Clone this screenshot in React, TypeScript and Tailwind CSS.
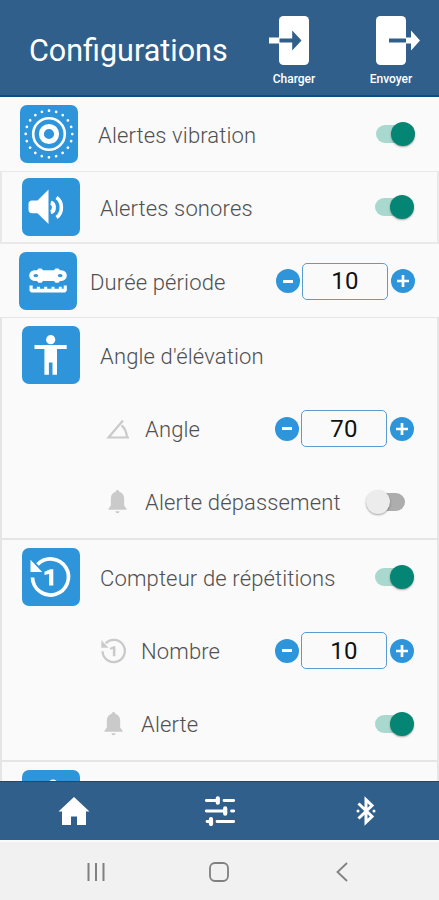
import { useState } from 'react';
import type { ReactNode } from 'react';

interface SwitchProps {
  initial: boolean;
  label: string;
}

function Switch({ initial, label }: SwitchProps) {
  const [on, setOn] = useState(initial);

  return (
    <button
      type="button"
      role="switch"
      aria-checked={on}
      aria-label={label}
      onClick={() => setOn(!on)}
      className="relative block w-[39px] h-[24px] shrink-0"
    >
      <span className={on ? 'absolute left-0 top-[3px] w-[34px] h-[18px] rounded-full bg-[#a9d8cf]' : 'absolute left-[5px] top-[3px] w-[34px] h-[18px] rounded-full bg-[#adadad]'} />
      <span className={on ? 'absolute right-0 top-0 size-[24px] rounded-full bg-[#058573] shadow-[0_1px_2px_rgba(0,0,0,0.35)]' : 'absolute left-0 top-0 size-[24px] rounded-full bg-[#ececec] shadow-[0_1px_2px_rgba(0,0,0,0.35)]'} />
    </button>
  );
}

function Stepper({ initial, label }: { initial: number; label: string }) {
  const [value, setValue] = useState(initial);

  return (
    <div className="flex items-center">
      <button type="button" aria-label={`${label} -`} onClick={() => setValue(value - 1)} className="size-[24px] rounded-full bg-[#2e95da] flex items-center justify-center">
        <span className="w-[10px] h-[3px] bg-white" />
      </button>
      <div className="ml-[2px] mr-[3px] w-[86px] h-[37px] rounded-[5px] border border-[#5c9bd0] flex items-center justify-center text-[24px] font-normal text-[#111111]">
        {value}
      </div>
      <button type="button" aria-label={`${label} +`} onClick={() => setValue(value + 1)} className="size-[24px] rounded-full bg-[#2e95da] flex items-center justify-center">
        <svg viewBox="0 0 12 12" className="size-[12px]" stroke="white" strokeWidth="2.7">
          <path d="M6 0v12M0 6h12" />
        </svg>
      </button>
    </div>
  );
}

function Tile({ children }: { children?: ReactNode }) {
  return (
    <div className="size-[58px] shrink-0 rounded-[7px] bg-[#2e95da]">
      <svg viewBox="0 0 58 58" className="size-[58px]" fill="none">
        {children}
      </svg>
    </div>
  );
}

function CounterIcon() {
  return (
    <>
      <path d="M10.500 29.500A18 18 0 1 0 15.500 16.500" stroke="currentColor" strokeWidth="3.700" />
      <path d="M8.500 11.700v12.200h11.700z" fill="currentColor" />
      <path d="M22.500 23.800l5.800-2.500h3V37.500h-4.200V25.900l-4.600 1.200z" fill="currentColor" />
    </>
  );
}

function BellIcon() {
  return (
    <svg viewBox="0 0 20 26" className="w-[19px] h-[25px]" fill="#cacaca">
      <path d="M10 .8c1.2 0 1.9.8 1.9 1.9 3.300.9 5.100 3.800 5.100 7.300v7.200l2.500 3.400v1H.5v-1L3 17.200V10c0-3.500 1.800-6.400 5.100-7.300C8.100 1.600 8.800.8 10 .8zM7.800 23.200h4.400c-.2 1.400-1 2.100-2.200 2.100s-2-.7-2.200-2.100z" />
    </svg>
  );
}

function Header() {
  return (
    <header className="h-[97px] shrink-0 bg-[#305f8b] border-b-2 border-[#0f4c80] flex text-white">
      <h1 className="pl-[29px] pt-[30px] w-[265px] text-[30.5px] leading-[42px]">Configurations</h1>
      <button type="button" className="w-[58px] pt-[15px] flex flex-col items-center">
        <svg viewBox="0 0 58 51" className="w-[58px] h-[51px]" fill="white">
          <rect x="14" y="1" width="30" height="49" rx="4.500" />
          <path d="M4 22.500h10.500v6H4z" />
          <path d="M14.500 23.500h12.700v-8L36.500 25.500l-9.300 10v-8H14.500z" fill="#305f8b" />
        </svg>
        <span className="mt-[6px] text-[12px] leading-[14px] font-medium">Charger</span>
      </button>
      <button type="button" className="ml-[39px] w-[58px] pt-[15px] flex flex-col items-center">
        <svg viewBox="0 0 58 51" className="w-[58px] h-[51px]" fill="white">
          <rect x="14" y="1" width="30" height="49" rx="4.500" />
          <path d="M27 23.500h17v4H27z" fill="#305f8b" />
          <path d="M44 22.500h5v-7l9 10-9 10v-7h-5z" />
        </svg>
        <span className="mt-[6px] text-[12px] leading-[14px] font-medium">Envoyer</span>
      </button>
    </header>
  );
}

function Settings() {
  return (
    <main className="h-[684px] shrink-0 overflow-hidden bg-[#fafafa] text-[22px] font-light tracking-[0.14px] text-[#505050]">
      <section className="h-[74px] pl-[20px] pr-[24px] flex items-center">
        <Tile>
          <circle cx="29" cy="29" r="23.300" stroke="white" strokeWidth="2.700" strokeLinecap="round" pathLength="20" strokeDasharray="0.01 0.99" />
          <circle cx="29" cy="29" r="15.800" stroke="white" strokeWidth="2.600" />
          <circle cx="29" cy="29" r="7.600" stroke="white" strokeWidth="5" />
        </Tile>
        <span className="ml-[20px] mr-auto pt-[3px]">Alertes vibration</span>
        <Switch initial label="Alertes vibration" />
      </section>

      <section className="h-[73px] pl-[20px] pr-[23px] flex items-center border-2 border-t border-[#e9e9e9]">
        <Tile>
          <path d="M6.500 26c0-2.200 1.300-3.500 3.500-3.500h5.500L26.500 11.500v34.500L15.500 35.300H10c-2.200 0-3.500-1.300-3.500-3.500z" fill="white" />
          <path d="M28.800 24.800c4.200 1 4.200 8.400 0 9.400" stroke="white" strokeWidth="4" />
          <path d="M34.500 19.500c6.500 4.500 6.500 15.500 0 20" stroke="white" strokeWidth="3.600" />
        </Tile>
        <span className="ml-[20px] mr-auto pt-[3px]">Alertes sonores</span>
        <Switch initial label="Alertes sonores" />
      </section>

      <section className="h-[73px] pt-[1px] pl-[19px] pr-[24px] flex items-center">
        <Tile>
          <path d="M15.500 18.300h2.500l1.500-1.800h3l1.500 1.800h11l1.500-1.800h3l1.500 1.800h1.500a5.300 5.300 0 0 1 0 10.600H41l-1.500 1.800h-3L35 28.900H24l-1.500 1.800h-3L18 28.900h-2.500a5.300 5.300 0 0 1 0-10.600z" fill="white" />
          <ellipse cx="16.800" cy="23.600" rx="2.400" ry="1.700" fill="#2e95da" />
          <ellipse cx="41.200" cy="23.600" rx="2.400" ry="1.700" fill="#2e95da" />
          <path d="M10.500 33.500h3.200v3.300h4.200v-2h3v2h4.300v-2h3v2h4.300v-2h3v2h4.300v-2h3v2h1.900v-3.300h3.100v5.300l-1.700 1.700H12.200l-1.700-1.700z" fill="white" />
        </Tile>
        <span className="ml-[13px] mr-auto pt-[3px]">Durée période</span>
        <Stepper initial={10} label="Durée période" />
      </section>

      <section className="h-[221px] pl-[20px] pr-[23px] border-x-2 border-t border-[#e5e5e5]">
        <div className="h-[74px] flex items-center">
          <Tile>
            <circle cx="28.700" cy="13.700" r="4.600" fill="white" />
            <path d="M12.500 19h32.200v4H35V48.700h-4.500V36.500h-3.600V48.700h-4.500V23h-9.900z" fill="white" />
          </Tile>
          <span className="ml-[20px] pt-[3px]">Angle d'élévation</span>
        </div>
        <div className="h-[73px] pl-[84px] flex items-center">
          <svg viewBox="0 0 24 20" className="w-[24px] h-[20px]" fill="none" stroke="#cacaca" strokeWidth="2.200">
            <path d="M17 1.500L2.500 18.500H23M15.500 6.500c3.200 2.200 5 6.500 5.500 12" />
          </svg>
          <span className="ml-[15px] mr-auto pt-[2px]">Angle</span>
          <Stepper initial={70} label="Angle" />
        </div>
        <div className="h-[73px] pl-[86px] pr-[9px] flex items-center">
          <BellIcon />
          <span className="ml-[18px] mr-auto pt-[2px]">Alerte dépassement</span>
          <Switch initial={false} label="Alerte dépassement" />
        </div>
      </section>

      <section className="h-[222px] pl-[20px] pr-[23px] border-x-2 border-t-2 border-[#e5e5e5]">
        <div className="h-[74px] flex items-center">
          <div className="text-white">
            <Tile>
              <CounterIcon />
            </Tile>
          </div>
          <span className="ml-[20px] mr-auto pt-[3px]">Compteur de répétitions</span>
          <Switch initial label="Compteur de répétitions" />
        </div>
        <div className="h-[73px] pl-[79px] flex items-center">
          <svg viewBox="8 8 42 42" className="size-[26px] text-[#cacaca]" fill="none">
            <CounterIcon />
          </svg>
          <span className="ml-[14px] mr-auto pt-[2px]">Nombre</span>
          <Stepper initial={10} label="Nombre" />
        </div>
        <div className="h-[73px] pl-[82px] flex items-center">
          <BellIcon />
          <span className="ml-[18px] mr-auto pt-[2px]">Alerte</span>
          <Switch initial label="Alerte" />
        </div>
      </section>

      {/* Next card, cut off by the tab bar */}
      <section className="h-[222px] pl-[20px] pt-[8px] border-x-2 border-t-2 border-[#e5e5e5]">
        <Tile>
          <circle cx="31" cy="14" r="4.600" fill="white" />
        </Tile>
      </section>
    </main>
  );
}

function TabBar() {
  return (
    <nav className="h-[59px] pl-[1px] shrink-0 bg-[#305f8b] border-t border-[#0f4c80] grid grid-cols-3 items-center justify-items-center">
      <svg viewBox="0 0 32 30" className="w-[32px] h-[30px]" fill="white">
        <path d="M16 1L.5 15.500H4V29h9v-8.500h6V29h9V15.500h3.500z" />
      </svg>
      <svg viewBox="0 0 32 30" className="w-[32px] h-[30px]" fill="none" stroke="white" strokeLinecap="round">
        <path d="M2.300 4.500H13M20 4.500h9.700M2.300 15H20M27.500 15h2.200M3 25.500h3M13 25.500h16.700" strokeWidth="2.800" />
        <path d="M13.800 2.300v4.400M21.200 12.300v5.400M7 23v5" strokeWidth="4.200" />
      </svg>
      <svg viewBox="0 0 20 30" className="w-[20px] h-[30px]" fill="none" stroke="white" strokeWidth="3">
        <path d="M2.500 7.500L16 20.500 10 26.200V3.800l6 5.700L2.500 22.500" />
        <path d="M2 15h.01M18 15h.01" strokeLinecap="round" />
      </svg>
    </nav>
  );
}

function SystemBar() {
  return (
    <div className="h-[60px] pt-[1px] shrink-0 bg-[#f1f1f1] border-t-2 border-[#fafafa] grid grid-cols-3 items-center text-[#808080]">
      <svg viewBox="0 0 20 20" className="ml-[86px] w-[20px] h-[20px]" stroke="currentColor" strokeWidth="2">
        <path d="M2.500 1v18M10 1v18M17.500 1v18" />
      </svg>
      <svg viewBox="0 0 20 20" className="justify-self-center w-[20px] h-[20px]" fill="none" stroke="currentColor" strokeWidth="1.800">
        <rect x="1" y="1" width="18" height="18" rx="5" />
      </svg>
      <svg viewBox="0 0 12 20" className="ml-[43px] w-[12px] h-[20px]" fill="none" stroke="currentColor" strokeWidth="1.800">
        <path d="M11 1L1.500 10l9.500 9" />
      </svg>
    </div>
  );
}

export default function App() {
  return (
    <div className="w-[439px] h-[900px] overflow-hidden flex flex-col bg-[#fafafa] font-['Roboto',sans-serif]">
      <Header />
      <Settings />
      <TabBar />
      <SystemBar />
    </div>
  );
}
